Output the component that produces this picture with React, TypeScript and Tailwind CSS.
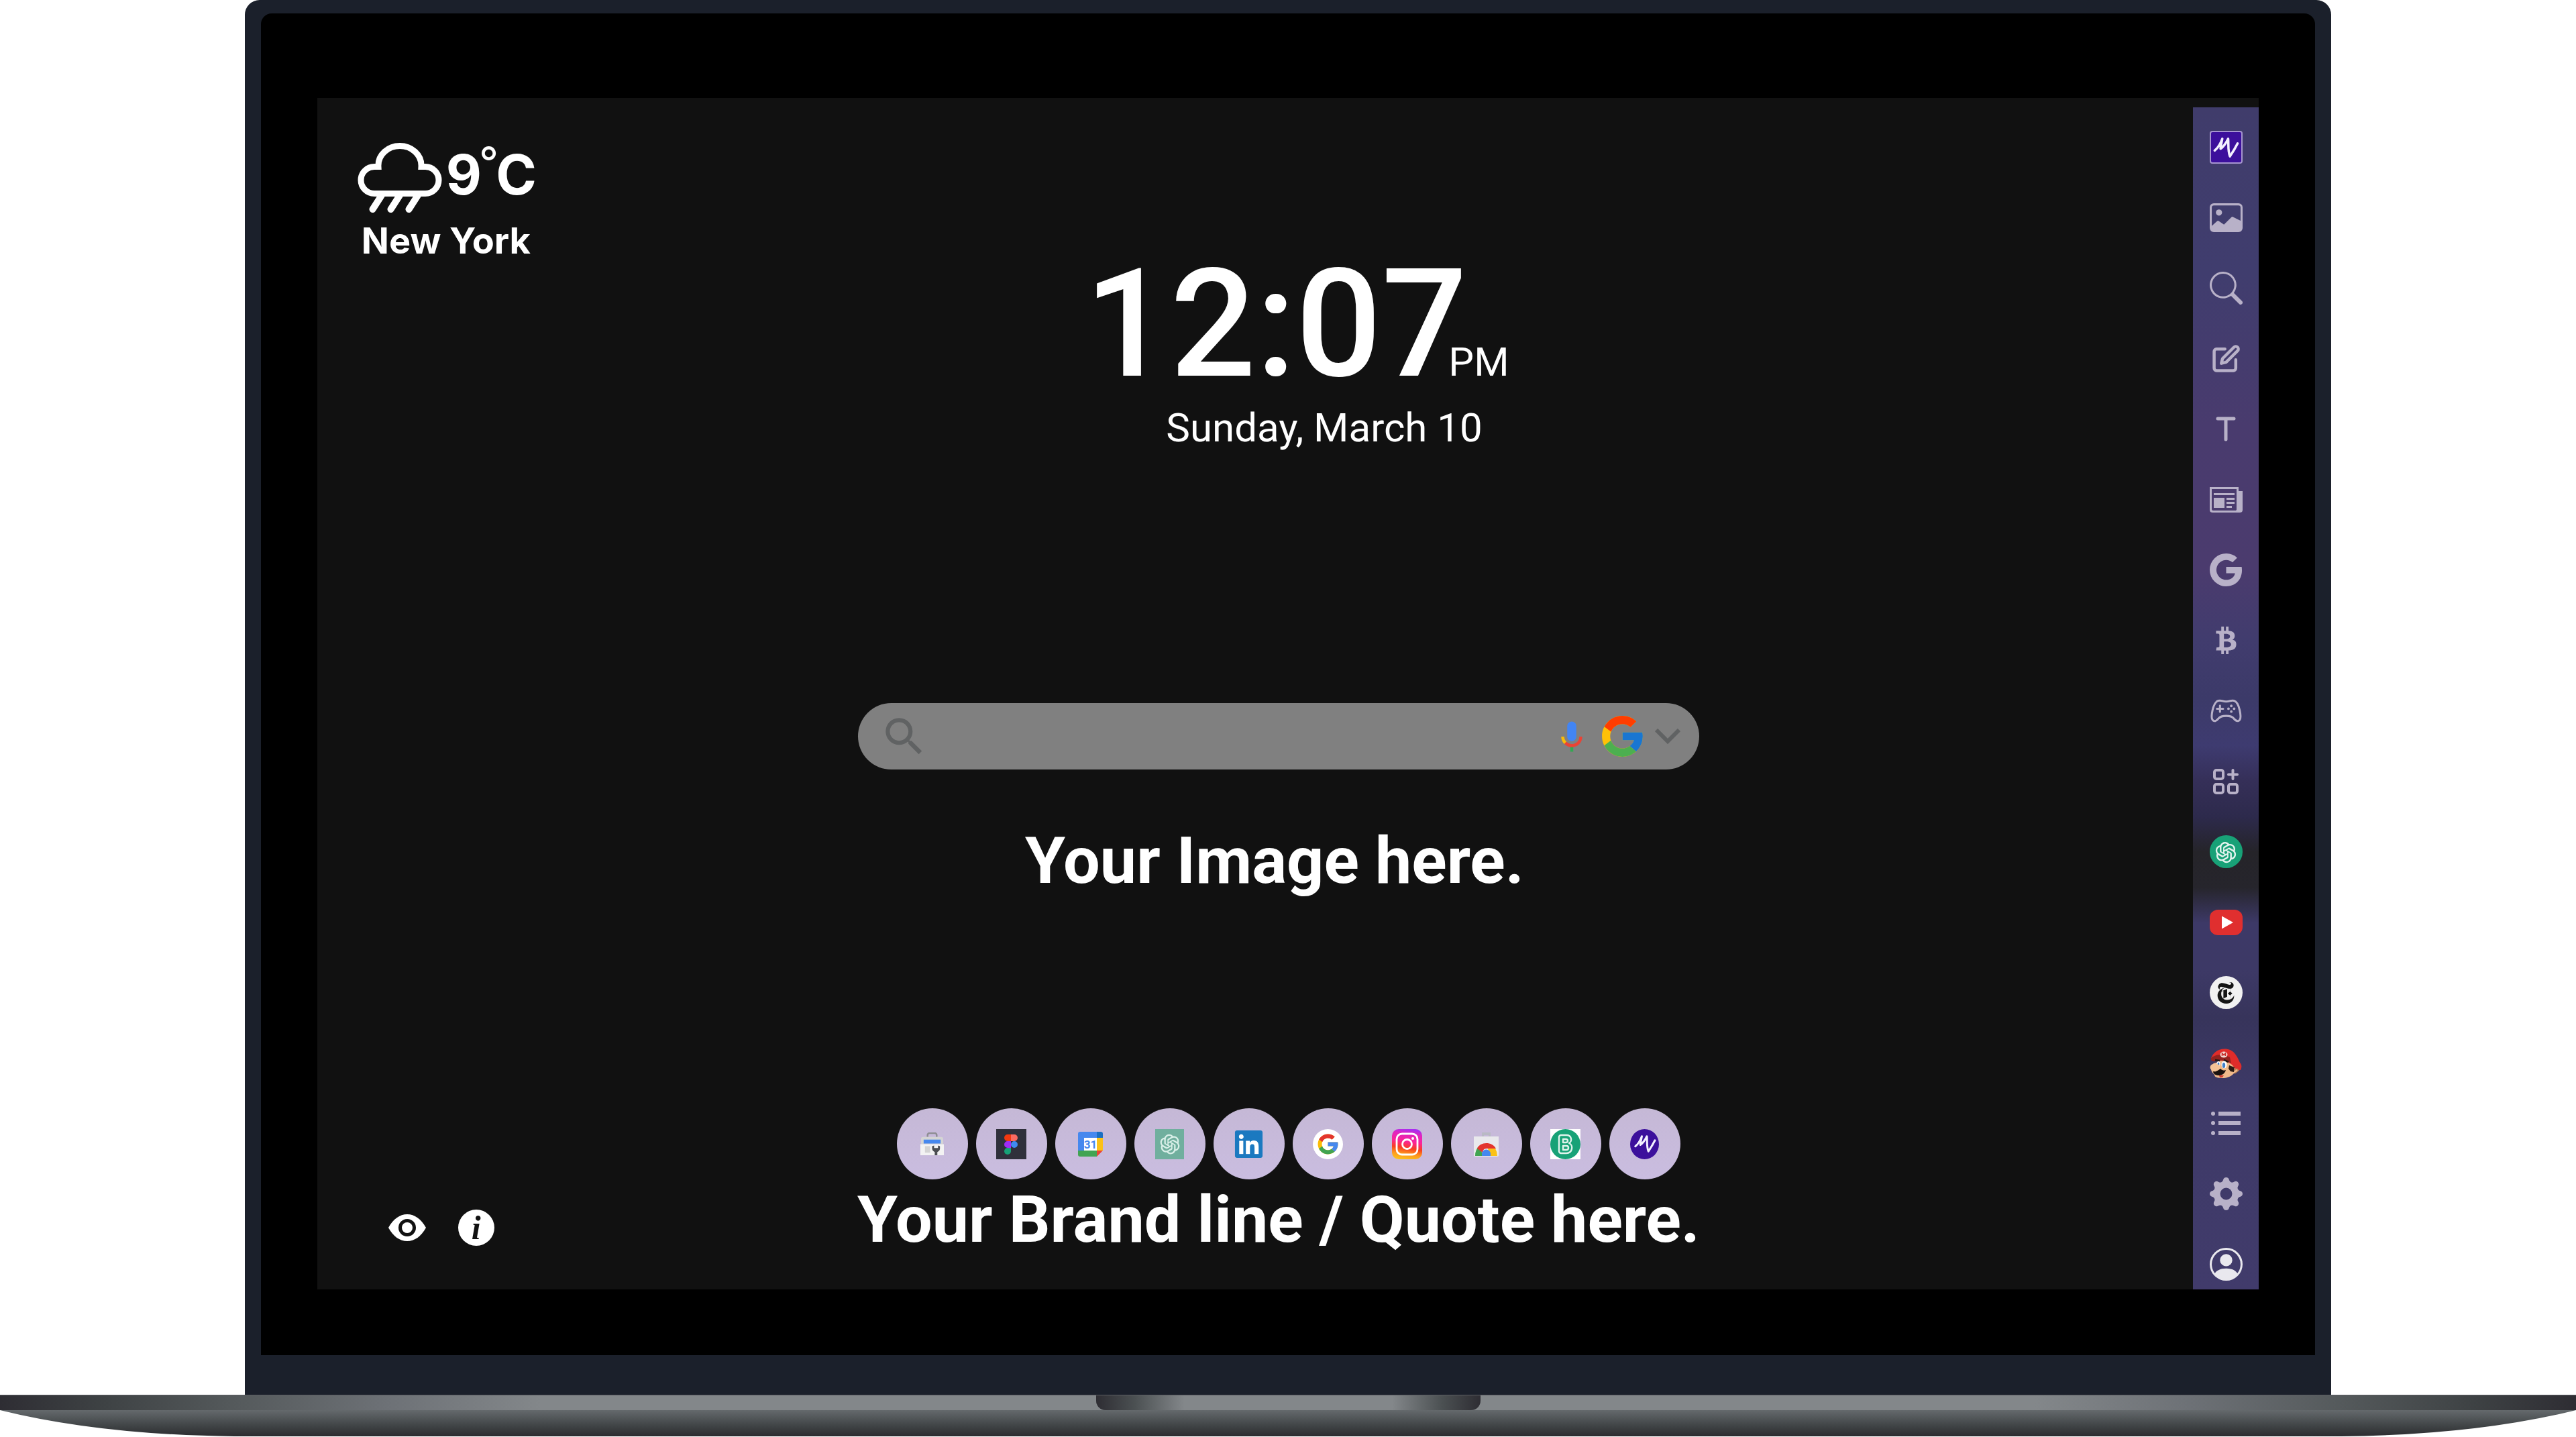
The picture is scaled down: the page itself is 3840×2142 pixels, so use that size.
import type { ReactNode } from "react";
import { AiOutlineOpenAI } from "react-icons/ai";
import { BsGearFill, BsGoogle, BsImage, BsPersonCircle, BsSearch } from "react-icons/bs";
import { FaBtc, FaLinkedin } from "react-icons/fa";
import { FcGoogle } from "react-icons/fc";
import { FiEdit } from "react-icons/fi";
import { IoGameControllerOutline } from "react-icons/io5";
import { MdSearch } from "react-icons/md";
import { SiNewyorktimes } from "react-icons/si";

interface LinkItem {
  label: string;
  icon: ReactNode;
}

function Scribble({ className }: { className: string }) {
  return (
    <svg className={className} viewBox="0 0 48 48" fill="none" stroke="#f3f0ff" strokeWidth={4} strokeLinecap="round" strokeLinejoin="round">
      <path d="M5 29c5-4 10-12 13-20-1 6-3 12-3 17 6-4 10-11 13-17 1 9-1 20 3 30 4-6 9-14 13-22" />
    </svg>
  );
}

function TypeIcon() {
  return (
    <svg className="h-[37px] w-[30px]" viewBox="0 0 30 37" fill="none" stroke="currentColor" strokeWidth={5} strokeLinecap="round">
      <path d="M3 3h24M15 3v31" />
    </svg>
  );
}

function NewsIcon() {
  return (
    <svg className="h-[38px] w-[49px]" viewBox="0 0 49 38" fill="currentColor">
      <path fillRule="evenodd" d="M0 0h43v6h6v28a4 4 0 0 1-4 4H4a4 4 0 0 1-4-4zM3 3v30a2 2 0 0 0 2 2h34a2 2 0 0 0 1-2V3z" />
      <path d="M6 9h31v3H6zM6 16h16v15H6zM25 16h12v3H25zM25 22h12v3H25zM25 28h8v3h-8z" />
    </svg>
  );
}

function WidgetsIcon() {
  return (
    <svg className="h-[38px] w-[38px]" viewBox="0 0 38 38" fill="none" stroke="currentColor" strokeWidth={4}>
      <rect x="2" y="2" width="13" height="13" rx="3" />
      <rect x="2" y="23" width="13" height="13" rx="3" />
      <rect x="23" y="23" width="13" height="13" rx="3" />
      <path d="M29.500 2v13M23 8.500h13" strokeLinecap="round" />
    </svg>
  );
}

function YoutubeIcon() {
  return (
    <svg className="h-[38px] w-[49px]" viewBox="0 0 49 38">
      <rect width="49" height="38" rx="12" fill="#e02f2f" />
      <path d="M18 9.500v19L35 19z" fill="#fff" />
    </svg>
  );
}

function MarioIcon() {
  return (
    <svg className="h-[44px] w-[48px]" viewBox="0 0 48 44">
      <path d="M3 27c0-5 5-6 8-6l4-6 18 3 8 7c4 0 5 5 2 8-3 3-6 3-8 5-4 4-10 6-16 6-7 0-12-1-12-5-3-3-7-7-4-12z" fill="#efb98a" />
      <path d="M2 14C6 4 16-1 27 1c10 2 14 11 18 20 3 3 3 7 1 11-5 1-9-3-12-7-5-5-10-6-16-7-6 0-12 1-16-1z" fill="#e02c2a" />
      <path d="M2 14c5-5 17-7 28-1l2 9c-8-5-16-5-24-3-4 0-7-1-6-5z" fill="#93231f" />
      <ellipse cx="21" cy="9" rx="5.500" ry="4.500" fill="#f2d8d2" />
      <path d="M18.500 11V7l2.500 2.500L23.500 7v4" fill="none" stroke="#c9302c" strokeWidth={1.600} />
      <path d="M8 17l7 1M21 17l7 3" stroke="#231815" strokeWidth={2.600} />
      <ellipse cx="13" cy="22.500" rx="2.600" ry="3.600" fill="#fff" />
      <ellipse cx="21.500" cy="24" rx="4" ry="5.500" fill="#fff" />
      <ellipse cx="13" cy="23" rx="1.400" ry="2.600" fill="#3f7fc8" />
      <ellipse cx="21" cy="25" rx="2.200" ry="4" fill="#3f7fc8" />
      <path d="M29 25l8 3-1 7-5-1-3-4z" fill="#2b1a14" />
      <ellipse cx="8" cy="28" rx="7.500" ry="5.500" fill="#f3c396" />
      <path d="M5 34c5 1 8-2 11-4 3 3 6 3 8 2-1 5-6 8-10 8-5 0-9-2-9-6z" fill="#19110e" />
      <path d="M14 40h7l-2 3h-4z" fill="#d33a2e" />
      <path d="M37 33c2-4 6-3 5 0-1 2-3 3-5 4" fill="none" stroke="#b97d51" strokeWidth={1.500} />
    </svg>
  );
}

function ListIcon() {
  return (
    <svg className="h-[38px] w-[44px]" viewBox="0 0 44 38" fill="currentColor">
      <circle cx="3" cy="4" r="3" />
      <circle cx="3" cy="18" r="3" />
      <circle cx="3" cy="33" r="3" />
      <path d="M11 1h33v6H11zM11 15h33v6H11zM11 30h33v6H11z" />
    </svg>
  );
}

function CloudRainIcon() {
  return (
    <svg className="h-[104px] w-[126px]" viewBox="0 0 126 104" fill="none" stroke="#fff" strokeWidth={9}>
      <path d="M25 75.500a20 20 0 0 1 0-40h6C30 17 46 4.500 63 4.500S96 17 95 35.500h6a20 20 0 0 1 0 40z" />
      <path d="M36 78L22.500 99M63 78L49.500 99M90 78L76.500 99" strokeWidth={10} strokeLinecap="round" />
    </svg>
  );
}

function MicIcon() {
  return (
    <svg className="h-[54px] w-[54px]" viewBox="0 0 24 24">
      <path fill="#4285f4" d="M12 15c1.660 0 3-1.310 3-2.970V5.010C15 3.350 13.660 2 12 2S9 3.340 9 5.010v7.020C9 13.690 10.340 15 12 15z" />
      <path fill="#34a853" d="M11 18.080h2V22h-2z" />
      <path fill="#fbbc05" d="M7.050 16.870C5.780 15.540 5 14.040 5 12h2c0 1.450.560 2.420 1.470 3.380v.320l-1.150 1.180z" />
      <path fill="#ea4335" d="M12 16.930a4.970 5.250 0 0 1-3.540-1.550l-1.410 1.490C8.310 18.210 10.070 19 12 19c3.870 0 6.990-2.920 6.990-7H17c0 2.920-2.240 4.930-5 4.930z" />
    </svg>
  );
}

function DevConsoleIcon() {
  return (
    <svg className="h-[35px] w-[35px]" viewBox="0 0 36 36">
      <path d="M11 7V4a3 3 0 0 1 3-3h8a3 3 0 0 1 3 3v3" fill="none" stroke="#8d8d92" strokeWidth={2.500} />
      <path d="M4 7h28a3 3 0 0 1 3 3v8H1v-8a3 3 0 0 1 3-3z" fill="#d4d4d4" />
      <path d="M5 11h26v6H5z" fill="#4688ee" />
      <path d="M0 18h36v17H0z" fill="#f3f3f3" />
      <path d="M7 21h8v10H7z" fill="#d4d4d4" />
      <path d="M18 21v4a6 6 0 0 0 4 5v5h4v-5a6 6 0 0 0 4-5v-4l-3-1v4h-6v-4z" fill="#4c4e52" />
    </svg>
  );
}

function FigmaIcon() {
  return (
    <svg className="h-[45px] w-[45px]" viewBox="0 0 45 45">
      <path d="M0 0h45v45H0z" fill="#2f303b" />
      <path d="M22 8h-5a5 5 0 0 0 0 10h5z" fill="#f4380f" />
      <path d="M22 8h5a5 5 0 0 1 0 10h-5z" fill="#fb6a61" />
      <path d="M22 18h-5a5 5 0 0 0 0 10h5z" fill="#a02cf5" />
      <circle cx="27" cy="23" r="5" fill="#3f8bf0" />
      <path d="M22 28h-5a5 5 0 1 0 5 5z" fill="#17a277" />
    </svg>
  );
}

function CalendarIcon() {
  return (
    <svg className="h-[37px] w-[37px]" viewBox="0 0 37 37">
      <path d="M3 0h25v9H9v19H0V3a3 3 0 0 1 3-3z" fill="#4688ee" />
      <path d="M28 0h6a3 3 0 0 1 3 3v6h-9z" fill="#1b6fc2" />
      <path d="M28 9h9v19h-9z" fill="#fbc116" />
      <path d="M0 28h28v9H3a3 3 0 0 1-3-3z" fill="#41a452" />
      <path d="M28 28h9l-9 9z" fill="#ea4335" />
      <path d="M9 9h19v19H9z" fill="#fff" />
      <text x="18.500" y="25" textAnchor="middle" fontSize="17" fontWeight="700" fontFamily="Roboto, sans-serif" fill="#4688ee">31</text>
    </svg>
  );
}

function LinkedinIcon() {
  return (
    <span className="flex h-[42px] w-[42px] items-center justify-center bg-[linear-gradient(#fff,#fff)] bg-size-[30px_30px] bg-center bg-no-repeat">
      <FaLinkedin className="h-[47px] w-[47px] shrink-0 text-[#1b79c0]" />
    </span>
  );
}

function GoogleBadge() {
  return (
    <svg className="h-[45px] w-[45px]" viewBox="-6 -6 60 60">
      <circle cx="24" cy="24" r="30" fill="#fff" />
      <path fill="#fbbc05" d="M43.611 20.083H42V20H24v8h11.303c-1.649 4.657-6.080 8-11.303 8-6.627 0-12-5.373-12-12s5.373-12 12-12c3.059 0 5.842 1.154 7.961 3.039l5.657-5.657C34.046 6.053 29.268 4 24 4 12.955 4 4 12.955 4 24s8.955 20 20 20 20-8.955 20-20c0-1.341-.138-2.650-.389-3.917z" />
      <path fill="#e3352e" d="m6.306 14.691 6.571 4.819C14.655 15.108 18.961 12 24 12c3.059 0 5.842 1.154 7.961 3.039l5.657-5.657C34.046 6.053 29.268 4 24 4 16.318 4 9.656 8.337 6.306 14.691z" />
      <path fill="#41a452" d="M24 44c5.166 0 9.860-1.977 13.409-5.192l-6.190-5.238A11.910 11.910 0 0 1 24 36c-5.202 0-9.619-3.317-11.283-7.946l-6.522 5.025C9.505 39.556 16.227 44 24 44z" />
      <path fill="#4688ee" d="M43.611 20.083H42V20H24v8h11.303a12.040 12.040 0 0 1-4.087 5.571l.003-.002 6.190 5.238C36.971 39.205 44 34 44 24c0-1.341-.138-2.650-.389-3.917z" />
    </svg>
  );
}

function InstagramIcon() {
  return (
    <svg className="h-[45px] w-[45px]" viewBox="0 0 45 45">
      <defs>
        <linearGradient id="instagram-sweep" x1="0.35" y1="1" x2="0.5" y2="0">
          <stop offset="0" stopColor="#fdc01c" />
          <stop offset="0.18" stopColor="#fd9a1e" />
          <stop offset="0.38" stopColor="#f8401f" />
          <stop offset="0.6" stopColor="#fb2498" />
          <stop offset="0.85" stopColor="#e026c0" />
          <stop offset="1" stopColor="#a92df0" />
        </linearGradient>
      </defs>
      <rect width="45" height="45" rx="10" fill="url(#instagram-sweep)" />
      <g fill="none" stroke="#fff" strokeWidth={2.800}>
        <rect x="7" y="7" width="31" height="31" rx="8" />
        <circle cx="22.500" cy="22.500" r="7" />
      </g>
      <circle cx="31" cy="14" r="2" fill="#fff" />
    </svg>
  );
}

function WebStoreIcon() {
  return (
    <svg className="h-[37px] w-[37px]" viewBox="0 0 37 37">
      <path d="M12 1h13v8h-3V5h-7v4h-3z" fill="#b9bac4" />
      <path d="M0 7h37v28a2 2 0 0 1-2 2H2a2 2 0 0 1-2-2z" fill="#e9e9ec" />
      <path d="M2 36a16.500 19 0 0 1 5-14l8 14z" fill="#41a452" />
      <path d="M35 36a16.500 19 0 0 0-3-11H21l3 11z" fill="#fbc116" />
      <path d="M5 25C9 15 27 14 33 25H19c-4 0-6 3-6 6z" fill="#e3352e" />
      <path d="M12 36v-3a6.500 6.500 0 0 1 13 0v3z" fill="#4688ee" />
    </svg>
  );
}

function BrandBIcon() {
  return (
    <svg className="h-[45px] w-[45px]" viewBox="0 0 45 45">
      <path d="M0 0h45v45H0z" fill="#fff" />
      <circle cx="22.500" cy="22.500" r="22.500" fill="#17a277" />
      <g fill="none" stroke="#dff3ec" strokeWidth={2.400} strokeLinejoin="round">
        <path d="M16 9h8c8 0 9 9 4 12 7 3 5 15-4 15h-8a3 3 0 0 1-3-3V12a3 3 0 0 1 3-3z" />
        <path d="M19 15h4c4 0 4 5 0 5h-4zM19 25h5c4 0 4 6 0 6h-5z" />
      </g>
    </svg>
  );
}

const TOOLS: LinkItem[] = [
  {
    label: "Home",
    icon: (
      <span className="flex h-[49px] w-[49px] items-center justify-center rounded-[4px] border-2 border-[#a695cf] bg-[#3c109c]">
        <Scribble className="h-[42px] w-[42px]" />
      </span>
    ),
  },
  { label: "Wallpaper", icon: <BsImage className="h-[49px] w-[49px]" /> },
  { label: "Search", icon: <BsSearch className="h-[49px] w-[49px]" /> },
  { label: "Notes", icon: <FiEdit className="h-[43px] w-[43px]" strokeWidth={2.5} /> },
  { label: "Text", icon: <TypeIcon /> },
  { label: "News", icon: <NewsIcon /> },
  { label: "Google", icon: <BsGoogle className="h-[49px] w-[49px]" /> },
  { label: "Crypto", icon: <FaBtc className="h-[41px] w-[41px]" /> },
  { label: "Games", icon: <IoGameControllerOutline className="h-[49px] w-[49px]" /> },
  { label: "Widgets", icon: <WidgetsIcon /> },
  {
    label: "ChatGPT",
    icon: (
      <span className="flex h-[49px] w-[49px] items-center justify-center rounded-full bg-[#18a177] text-[#e4f4ef]">
        <AiOutlineOpenAI className="h-[40px] w-[40px]" />
      </span>
    ),
  },
  { label: "YouTube", icon: <YoutubeIcon /> },
  {
    label: "The New York Times",
    icon: (
      <span className="flex h-[49px] w-[49px] items-center justify-center rounded-full bg-[#f1f1f1] text-[#151515]">
        <SiNewyorktimes className="h-[32px] w-[32px]" />
      </span>
    ),
  },
  { label: "Mario", icon: <MarioIcon /> },
];

const ACCOUNT: LinkItem[] = [
  { label: "List", icon: <ListIcon /> },
  { label: "Settings", icon: <BsGearFill className="h-[49px] w-[49px]" /> },
  { label: "Profile", icon: <BsPersonCircle className="h-[49px] w-[49px] text-[#e9e8ee]" /> },
];

const DOCK: LinkItem[] = [
  { label: "Developer Dashboard", icon: <DevConsoleIcon /> },
  { label: "Figma", icon: <FigmaIcon /> },
  { label: "Calendar", icon: <CalendarIcon /> },
  {
    label: "ChatGPT",
    icon: (
      <span className="flex h-[45px] w-[43px] items-center justify-center bg-[#70af9e] text-[#d9efe8]">
        <AiOutlineOpenAI className="h-[38px] w-[38px]" />
      </span>
    ),
  },
  { label: "LinkedIn", icon: <LinkedinIcon /> },
  { label: "Google", icon: <GoogleBadge /> },
  { label: "Instagram", icon: <InstagramIcon /> },
  { label: "Chrome Web Store", icon: <WebStoreIcon /> },
  { label: "Brand", icon: <BrandBIcon /> },
  {
    label: "Home",
    icon: (
      <span className="flex h-[45px] w-[43px] items-center justify-center rounded-[50%] bg-[#3c109c]">
        <Scribble className="h-[36px] w-[36px]" />
      </span>
    ),
  },
];

function Weather() {
  return (
    <section className="font-[Inter,sans-serif] text-white">
      <div className="flex items-start gap-1.5">
        <CloudRainIcon />
        <p className="text-[82px] leading-[96px] font-bold">
          9<span className="-mx-1 align-[25px] text-[64px] leading-[48px] font-normal">°</span>C
        </p>
      </div>
      <p className="mt-3 pl-1.5 text-[54px] leading-[60px] font-bold">New York</p>
    </section>
  );
}

function SearchBar() {
  return (
    <form className="flex h-[99px] w-[1254px] items-center gap-3 rounded-full bg-[#808080] pr-7 pl-8">
      <label htmlFor="search" aria-label="Search">
        <MdSearch className="h-[74px] w-[74px] text-[#606263]" />
      </label>
      <input id="search" type="text" className="h-full min-w-0 flex-1 bg-transparent text-[42px] text-white outline-none" />
      <button type="button" aria-label="Search by voice">
        <MicIcon />
      </button>
      <button type="button" aria-label="Google">
        <FcGoogle className="h-[73px] w-[73px]" />
      </button>
      <button type="button" aria-label="Change engine">
        <svg className="h-[23px] w-[38px]" viewBox="0 0 38 23" fill="none" stroke="#606263" strokeWidth={6}>
          <path d="M2 2l17 17L36 2" />
        </svg>
      </button>
    </form>
  );
}

function Dock() {
  return (
    <nav className="flex gap-3" aria-label="Shortcuts">
      {DOCK.map((item) => (
        <a key={item.label} href="#" aria-label={item.label} className="flex h-[106px] w-[106px] items-center justify-center rounded-full bg-linear-to-b from-[#c5b8d6] to-[#cabde0]">
          {item.icon}
        </a>
      ))}
    </nav>
  );
}

function SideButton({ item }: { item: LinkItem }) {
  return (
    <button type="button" aria-label={item.label} className="flex h-[49px] w-[49px] items-center justify-center">
      {item.icon}
    </button>
  );
}

function Sidebar() {
  return (
    <aside className="mt-[14px] flex w-[98px] shrink-0 flex-col items-center justify-between bg-[linear-gradient(#403c6b_0%,#403d6e_14%,#493b6e_27%,#4b3b6e_39%,#413c6e_45%,#3c3a69_50%,#3e3b70_54%,#352f58_57%,#2d2a4c_60%,#252429_63%,#26252c_66%,#3d3967_69%,#3d3966_73%,#37345b_77%,#3e3a68_84%,#413b6b_100%)] pt-[35px] pb-[13px] text-[#b8b1c8]">
      <div className="flex flex-col gap-14">
        {TOOLS.map((item) => (
          <SideButton key={item.label} item={item} />
        ))}
      </div>
      <div className="flex flex-col gap-14">
        {ACCOUNT.map((item) => (
          <SideButton key={item.label} item={item} />
        ))}
      </div>
    </aside>
  );
}

function LaptopBase() {
  return (
    <div>
      <div className="flex h-[23px] justify-center border-t border-[#5b5e62] bg-[linear-gradient(90deg,#2e2d33,#3e4244_4%,#54595b_9%,#6d7176_15%,#83878a_21%,#83878a_79%,#6d7176_85%,#54595b_91%,#3e4244_96%,#2e2d33)]">
        <div className="w-[573px] rounded-b-[14px] bg-[linear-gradient(90deg,#2e2d33,#4b5052_10%,#83878a_23%,#83878a_77%,#4b5052_90%,#2e2d33)]" />
      </div>
      <svg className="block h-[39px] w-full" viewBox="0 0 3840 39" preserveAspectRatio="none">
        <defs>
          <linearGradient id="underside" x1="0" y1="0" x2="0" y2="1">
            <stop offset="0" stopColor="#64696c" />
            <stop offset="0.6" stopColor="#404446" />
            <stop offset="1" stopColor="#2c2c30" />
          </linearGradient>
        </defs>
        <path d="M0 0Q150 37 350 39H3490Q3690 37 3840 0z" fill="url(#underside)" />
      </svg>
    </div>
  );
}

export default function App() {
  return (
    <div className="min-h-screen bg-white font-[Roboto,sans-serif]">
      {/* Lid */}
      <div className="mx-auto w-[81%] rounded-t-[22px] bg-[#1b202b] px-6 pt-5 pb-[59px]">
        <div className="rounded-t-[16px] bg-black px-[84px] pt-[126px] pb-[98px]">
          <div className="flex bg-[#111111]">
            <main className="flex flex-1 flex-col pt-[67px] pb-12 pl-[60px]">
              <Weather />

              <div className="mt-3.5 flex flex-col items-center text-white">
                <p className="flex items-baseline pl-[64px]">
                  <span className="text-[225px] leading-[160px] font-medium">12:07</span>
                  <span className="-ml-7 text-[60px] leading-[72px]">PM</span>
                </p>
                <p className="mt-[26px] pl-[146px] text-[60px] leading-[72px]">Sunday, March 10</p>
              </div>

              <div className="mt-[374px] flex flex-col items-center pl-[10px]">
                <SearchBar />
                <h1 className="mt-20 pr-3 text-[97px] leading-[112px] font-bold text-white">Your Image here.</h1>
              </div>

              <div className="mt-[313px] flex justify-center pl-[40px]">
                <Dock />
              </div>

              <div className="mt-1 grid grid-cols-[1fr_auto_1fr] items-center pl-[10px]">
                <div className="flex items-center gap-12 pt-6 pl-9 text-white">
                  <button type="button" aria-label="Show or hide">
                    <svg className="h-[40px] w-[56px]" viewBox="0 0 56 40" fill="currentColor">
                      <path fillRule="evenodd" d="M0 20C7 7 17 0 28 0s21 7 28 20c-7 13-17 20-28 20S7 33 0 20zm28 13a13 13 0 1 0 0-26 13 13 0 0 0 0 26z" />
                      <circle cx="28" cy="20" r="8" />
                    </svg>
                  </button>
                  <button type="button" aria-label="About" className="flex h-[54px] w-[54px] items-center justify-center rounded-full bg-white font-[Liberation_Serif,serif] text-[50px] leading-[54px] font-bold text-[#111111] italic">
                    i
                  </button>
                </div>
                <h2 className="text-[97px] leading-[112px] font-bold text-white">Your Brand line / Quote here.</h2>
              </div>
            </main>
            <Sidebar />
          </div>
        </div>
      </div>
      <LaptopBase />
    </div>
  );
}
